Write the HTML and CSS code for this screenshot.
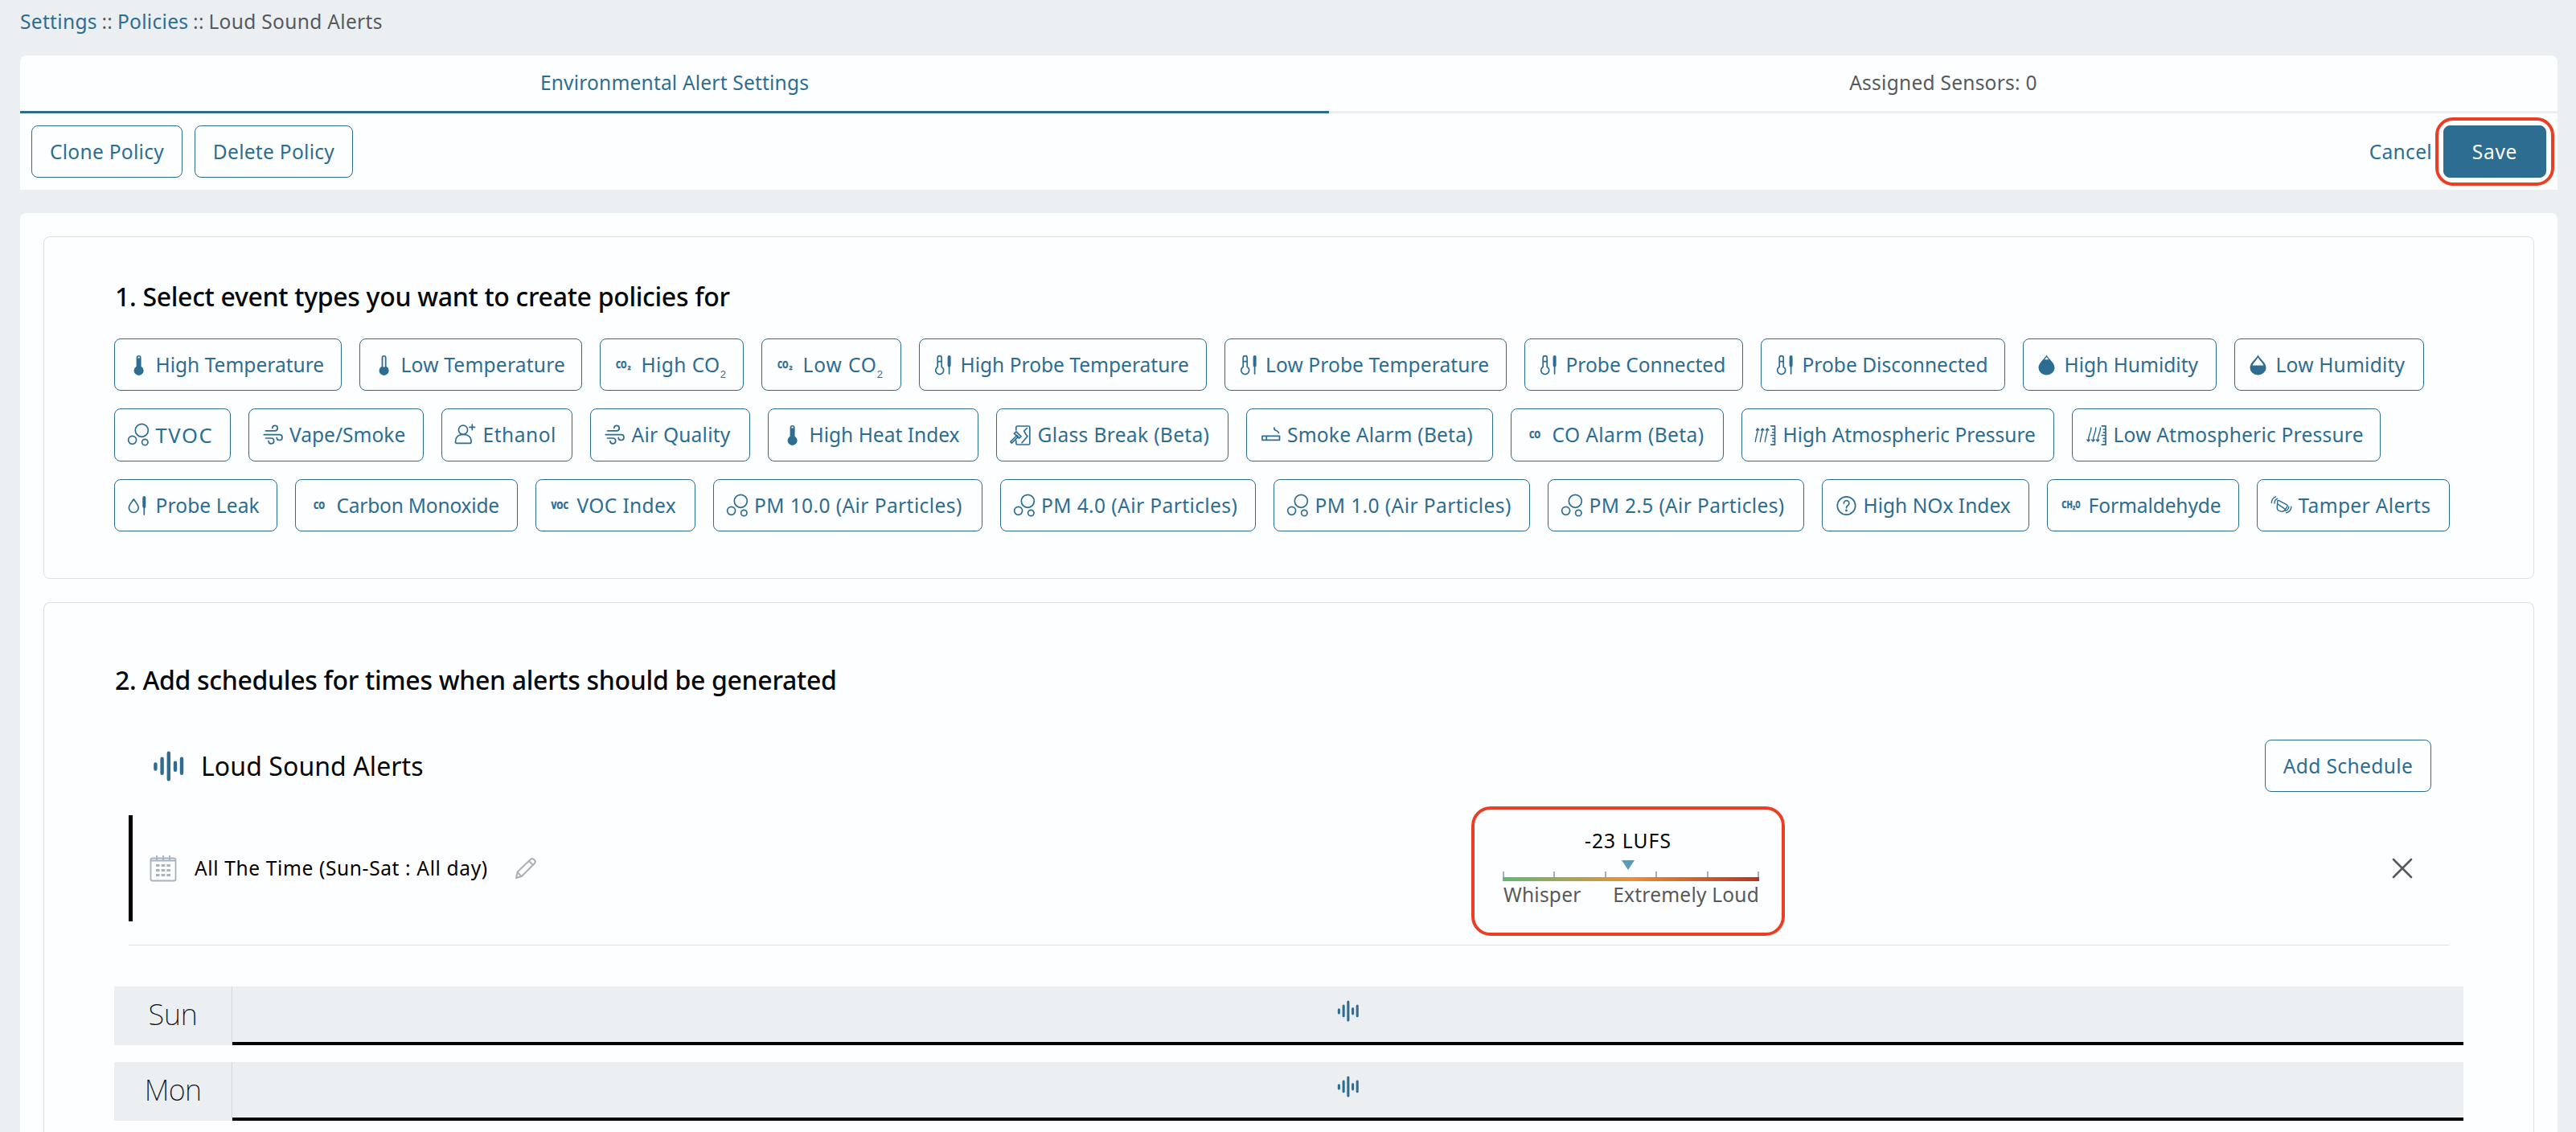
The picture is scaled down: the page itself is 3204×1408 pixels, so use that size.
FILE: index.html
```html
<!DOCTYPE html>
<html lang="en">
<head>
<meta charset="utf-8">
<title>Loud Sound Alerts</title>
<link rel="stylesheet" href="styles.css">
</head>
<body>
<svg class="sprite" aria-hidden="true">
  <symbol id="i-therm-full" viewBox="0 0 32 32"><path fill="currentColor" fill-rule="evenodd" d="M13.6 7a3 3 0 0 1 6 0v10.8a6 6 0 1 1-6 0zM15.4 7.6h2.4v-.8a1.2 1.2 0 0 0-2.4 0z"/></symbol>
  <symbol id="i-therm-low" viewBox="0 0 32 32"><path fill="currentColor" fill-rule="evenodd" d="M13.6 7a3 3 0 0 1 6 0v10.8a6 6 0 1 1-6 0zM15.4 18.4h2.4V6.8a1.2 1.2 0 0 0-2.4 0z"/></symbol>
  <symbol id="i-probe" viewBox="0 0 32 32"><path class="ln" d="M9.2 7.2a2.5 2.5 0 0 1 5 0v11a5 5 0 1 1-5 0zM9.2 11.6h5"/><path class="ln thick" d="M23.6 6v10.5"/><path class="ln" d="M23.6 17v10"/></symbol>
  <symbol id="i-leak" viewBox="0 0 32 32"><path class="ln" d="M10.3 8C8 11.5 4.4 15 4.4 18.600a5.900 5.900 0 0 0 11.800 0C16.200 15 12.600 11.500 10.300 8z"/><path class="ln thick" d="M23.3 6v11"/><path class="ln" d="M23.300 17v10"/></symbol>
  <symbol id="i-drop-full" viewBox="0 0 32 32"><path fill="currentColor" fill-rule="evenodd" d="M15.500 3.500C18.500 9 25.500 13 25.500 19.500a10 9 0 0 1-20 0C5.500 13 12.500 9 15.500 3.500zM13 9.300h5L15.500 6z"/></symbol>
  <symbol id="i-drop-half" viewBox="0 0 32 32"><path fill="currentColor" fill-rule="evenodd" d="M15.500 3.500C18.500 9 25.500 13 25.500 19.500a10 9 0 0 1-20 0C5.500 13 12.500 9 15.500 3.500zM8.500 16.500h14C21 13 17.500 10.500 15.500 6.800 13.500 10.500 10 13 8.500 16.500z"/></symbol>
  <symbol id="i-bubbles" viewBox="0 0 32 32"><g class="ln"><circle cx="20.300" cy="10.300" r="8"/><circle cx="8.600" cy="22.300" r="5"/><circle cx="24.300" cy="25" r="3.700"/></g></symbol>
  <symbol id="i-wind" viewBox="0 0 32 32"><path class="ln" d="M7.500 10.800H19a3.200 3.200 0 1 0-3.200-3.300M5.300 15.700H24.500a3.400 3.400 0 1 1-3.300 3.700M7.500 20h6.700a3.400 3.400 0 1 1-3.300 3.700"/></symbol>
  <symbol id="i-person" viewBox="0 0 32 32"><path class="ln" d="M3.500 24.500c0-6 4-9 9.800-9s9.800 3 9.800 9c0 1-.5 1.800-1.500 1.800H5c-1 0-1.500-.8-1.500-1.800zM24.300 3v6.600M21 6.300h6.600"/><circle class="ln" cx="13" cy="9.700" r="5.600"/></symbol>
  <symbol id="i-glass" viewBox="0 0 32 32"><path class="ln" d="M10.800 10V6.500q0-1.500 1.500-1.500h14q1.500 0 1.500 1.500v20q0 1.500-1.500 1.500h-14q-1.500 0-1.500-1.500V23M24.500 7.500l-3.700 3.700 1.500 3 2.700 3.500-3.500 4-3.500 4M8.500 14.200l2.500-2.300 6 6-2.500 2.300zM5.300 23l-1.500 1.500 1.600 1.600 8-8-1.600-1.600z"/></symbol>
  <symbol id="i-cig" viewBox="0 0 32 32"><path class="ln" d="M6 17.300h21.500v5H6zM11.300 17.300v5M20.800 7c-.5 5 4.500 2 5.700 6.500"/></symbol>
  <symbol id="i-atm-up" viewBox="0 0 32 32"><path class="ln thin" d="M3.300 24.500c.5-6 3-10 2.900-16M9.300 24.500c.5-6 3-10 2.900-16M15.300 24.500c.5-6 3-10 2.900-16M4.500 10l1.700-2 1.700 2M10.500 10l1.700-2 1.700 2M16.500 10l1.700-2 1.700 2"/><path class="ln" d="M22.800 4.800h4.700v23.400h-4.700M24.800 9h2.500M24.800 12.800h2.500M22.800 16.500h4.500M24.800 20.300h2.500M24.800 24h2.500"/></symbol>
  <symbol id="i-atm-down" viewBox="0 0 32 32"><path class="ln thin" d="M9.900 7c.3 6-3.500 9-3.400 16M15.800 7c.3 6-3.500 9-3.400 16M21.500 7c.3 6-3.500 9-3.400 16M4.800 22l1.700 2 1.700-2M10.700 22l1.700 2 1.700-2M16.400 22l1.700 2 1.700-2"/><path class="ln" d="M23.300 4.800h4.700v23.400h-4.700M25.300 9h2.500M25.300 12.800h2.500M23.300 16.500h4.500M25.300 20.300h2.500M25.300 24h2.500"/></symbol>
  <symbol id="i-question" viewBox="0 0 32 32"><circle class="ln" cx="16.500" cy="16" r="11.200"/><path class="ln" d="M13.300 13a3.300 3.300 0 1 1 5 2.800c-1.300.8-1.800 1.300-1.800 3"/><circle cx="16.500" cy="22" r="1.400" fill="currentColor"/></symbol>
  <symbol id="i-tamper" viewBox="0 0 32 32"><path class="ln thin" d="M13 9.300l10 5.300c1.200.7 1.400 1.500.8 2.600l-3.200 4.600c-2 2.600-9 1.200-9.300-2.500v-2.500l.5-6.500c.1-.9.500-1.300 1.200-1zM11.500 13.700l9.500 6.500M4.300 12.500c0-3.500 2-6.500 5.300-7.700M8 13c0-2.500 1.200-4.700 3.500-5.800M22.700 24.800c3.500-.8 5.700-3.500 6.200-7.500M21.500 22.300c2.500-.7 3.900-2.300 4.400-5"/></symbol>
  <symbol id="i-wave" viewBox="0 0 40 38"><path fill="none" stroke="currentColor" stroke-width="4.400" stroke-linecap="round" d="M3.400 16.500v6M11.600 9.800v18M19.800 2.800v32.500M28 14.800v9M36 9.800v18"/></symbol>
</svg>

<nav class="crumbs"><a>Settings</a> <i>::</i> <a>Policies</a> <i>::</i> <span>Loud Sound Alerts</span></nav>

<header class="top-card">
  <div class="tabs">
    <div class="tab active">Environmental Alert Settings</div>
    <div class="tab">Assigned Sensors: 0</div>
  </div>
  <div class="toolbar">
    <button class="btn clone">Clone Policy</button>
    <button class="btn delete">Delete Policy</button>
    <a class="cancel">Cancel</a>
    <button class="btn primary">Save</button>
  </div>
</header>

<main class="main-card">
  <section class="panel events">
    <h2>1. Select event types you want to create policies for</h2>
    <div class="chip-row row-a">
      <div class="chip t3"><svg><use href="#i-therm-full"/></svg>High Temperature</div>
      <div class="chip t5"><svg><use href="#i-therm-low"/></svg>Low Temperature</div>
      <div class="chip t7"><svg viewBox="0 0 32 32"><text x="6" y="19.800" textLength="13.500" lengthAdjust="spacingAndGlyphs">CO</text><text class="tiny" x="20.500" y="22.300" textLength="4" lengthAdjust="spacingAndGlyphs">2</text></svg>High CO<sub>2</sub></div>
      <div class="chip t12"><svg viewBox="0 0 32 32"><text x="6" y="19.800" textLength="13.500" lengthAdjust="spacingAndGlyphs">CO</text><text class="tiny" x="20.500" y="22.300" textLength="4" lengthAdjust="spacingAndGlyphs">2</text></svg>Low CO<sub>2</sub></div>
      <div class="chip t3"><svg><use href="#i-probe"/></svg>High Probe Temperature</div>
      <div class="chip t4"><svg><use href="#i-probe"/></svg>Low Probe Temperature</div>
      <div class="chip t3"><svg><use href="#i-probe"/></svg>Probe Connected</div>
      <div class="chip t3"><svg><use href="#i-probe"/></svg>Probe Disconnected</div>
      <div class="chip t3"><svg><use href="#i-drop-full"/></svg>High Humidity</div>
      <div class="chip t5"><svg><use href="#i-drop-half"/></svg>Low Humidity</div>
    </div>
    <div class="chip-row row-b">
      <div class="chip t27"><svg><use href="#i-bubbles"/></svg>TVOC</div>
      <div class="chip t3"><svg><use href="#i-wind"/></svg>Vape/Smoke</div>
      <div class="chip t8"><svg><use href="#i-person"/></svg>Ethanol</div>
      <div class="chip t5"><svg><use href="#i-wind"/></svg>Air Quality</div>
      <div class="chip t3"><svg><use href="#i-therm-full"/></svg>High Heat Index</div>
      <div class="chip t6"><svg><use href="#i-glass"/></svg>Glass Break (Beta)</div>
      <div class="chip t5"><svg><use href="#i-cig"/></svg>Smoke Alarm (Beta)</div>
      <div class="chip t7"><svg viewBox="0 0 32 32"><text x="9" y="19.800" textLength="14" lengthAdjust="spacingAndGlyphs">CO</text></svg>CO Alarm (Beta)</div>
      <div class="chip t3"><svg><use href="#i-atm-up"/></svg>High Atmospheric Pressure</div>
      <div class="chip t5"><svg><use href="#i-atm-down"/></svg>Low Atmospheric Pressure</div>
    </div>
    <div class="chip-row row-c">
      <div class="chip t4"><svg><use href="#i-leak"/></svg>Probe Leak</div>
      <div class="chip t1"><svg viewBox="0 0 32 32"><text x="9" y="19.800" textLength="14" lengthAdjust="spacingAndGlyphs">CO</text></svg>Carbon Monoxide</div>
      <div class="chip t6"><svg viewBox="0 0 32 32"><text x="5.500" y="20.300" textLength="21.500" lengthAdjust="spacingAndGlyphs">VOC</text></svg>VOC Index</div>
      <div class="chip t7"><svg><use href="#i-bubbles"/></svg>PM 10.0 (Air Particles)</div>
      <div class="chip t7"><svg><use href="#i-bubbles"/></svg>PM 4.0 (Air Particles)</div>
      <div class="chip t7"><svg><use href="#i-bubbles"/></svg>PM 1.0 (Air Particles)</div>
      <div class="chip t6"><svg><use href="#i-bubbles"/></svg>PM 2.5 (Air Particles)</div>
      <div class="chip t3"><svg><use href="#i-question"/></svg>High NOx Index</div>
      <div class="chip t2"><svg viewBox="0 0 32 32"><text x="4.300" y="19" textLength="13.500" lengthAdjust="spacingAndGlyphs">CH</text><text class="tiny" x="17.800" y="21" textLength="3.500" lengthAdjust="spacingAndGlyphs">2</text><text x="21.300" y="19" textLength="6.300" lengthAdjust="spacingAndGlyphs">O</text></svg>Formaldehyde</div>
      <div class="chip t6"><svg><use href="#i-tamper"/></svg>Tamper Alerts</div>
    </div>
  </section>

  <section class="panel schedules">
    <h2>2. Add schedules for times when alerts should be generated</h2>
    <div class="sched-head">
      <svg class="wave"><use href="#i-wave"/></svg>
      <h3>Loud Sound Alerts</h3>
      <button class="btn add">Add Schedule</button>
    </div>
    <div class="sched-item">
      <div class="sched-row">
        <div class="sched-name">
          <svg class="calendar" viewBox="0 0 34 34"><path d="M3.500 4.500h27q2 0 2 2v24q0 2-2 2h-27q-2 0-2-2v-24q0-2 2-2zM1.500 7.500h31M9 1v7M17 1v7M25 1v7"/><path class="dots" d="M8 13.500h18M8 19.500h18M8 25.500h18"/></svg>
          <span>All The Time (Sun-Sat : All day)</span>
          <svg class="pencil" viewBox="0 0 28 28"><path d="M2 26l1.600-7.500L19.800 3q2-2 4.200 0l.8.800q2 2 0 4.200L8.800 24zM18 5l5 5M3.500 19l5 5"/></svg>
        </div>
        <div class="gauge">
          <div class="value">-23 LUFS</div>
          <svg class="pointer" viewBox="0 0 16 12"><path d="M0 0h16L8 12z"/></svg>
          <div class="ticks"><b></b><b></b><b></b><b></b><b></b><b></b></div>
          <div class="bar"></div>
          <div class="ends"><span>Whisper</span><span>Extremely Loud</span></div>
        </div>
        <svg class="close" viewBox="0 0 26 26"><path d="M2 2l22 22M24 2L2 24"/></svg>
      </div>
    </div>
    <div class="days">
      <div class="day"><span>Sun</span><div class="track"><svg><use href="#i-wave"/></svg></div></div>
      <div class="day mon"><span>Mon</span><div class="track"><svg><use href="#i-wave"/></svg></div></div>
    </div>
  </section>
</main>
</body>
</html>
```
FILE: styles.css
```css
:root {
  --blue: #2d6d91;
  --page: #ebeff2;
  --card: #fdfeff;
  --line: #dcdfe4;
  --grey: #58595b;
  --mark: #e94025;
}
*, ::before, ::after { box-sizing: border-box; }
html, body { height: 1408px; overflow: hidden; }
body {
  margin: 0;
  padding: 0 23px 0 25px;
  background: var(--page);
  color: var(--grey);
  font: 400 24.5px/30px "Noto Sans", "Open Sans", sans-serif;
}
.sprite { display: none; }
svg { display: block; flex: none; overflow: visible; }
.ln { fill: none; stroke: currentColor; stroke-width: 1.7; stroke-linecap: round; stroke-linejoin: round; }
.thin { stroke-width: 1.4; }
.thick { stroke-width: 4; }
h2, h3 { margin: 0; color: #050708; font-size: 32px; line-height: 44px; }
h2 { font-weight: 500; letter-spacing: -.31px; padding-left: 1px; }
h3 { font-weight: 400; letter-spacing: .08px; }

.crumbs { display: flex; align-items: center; height: 69px; padding-bottom: 15px; letter-spacing: .33px; }
.crumbs i { font-style: normal; width: 25px; text-align: center; }
.crumbs a { color: var(--blue); }

.top-card { height: 167px; background: var(--card); border-radius: 8px 8px 0 0; }
.tabs { display: grid; grid-template-columns: 1628fr 1528fr; height: 72px; }
.tab {
  display: flex; align-items: center; justify-content: center;
  border-bottom: 3px solid var(--page); letter-spacing: .26px; padding-bottom: 1px;
}
.tab.active { color: var(--blue); border-color: var(--blue); letter-spacing: .2px; }
.toolbar { display: flex; align-items: center; padding: 15px 14px; }
.btn {
  height: 65px; padding: 0; border: 1px solid var(--blue); border-radius: 8px;
  background: var(--card); color: var(--blue); font: inherit; letter-spacing: .3px;
}
.clone { width: 188px; margin-right: 15px; }
.delete { width: 197px; }
.cancel { margin-left: auto; margin-right: 14px; color: var(--blue); letter-spacing: .35px; }
.primary { position: relative; width: 128px; background: var(--blue); color: #fff; letter-spacing: .7px; }
.primary::after {
  content: ""; position: absolute; inset: -11px; border: 4px solid var(--mark); border-radius: 22px;
}

.main-card {
  margin-top: 29px; padding: 29px 29px 0; height: 1143px; overflow: hidden;
  background: var(--card); border-radius: 8px 8px 0 0;
}
.panel { border: 1px solid var(--line); border-radius: 8px; padding: 0 87px; }
.events { height: 426px; padding-top: 52px; }
.events h2 { margin-bottom: 30px; }
.chip-row { display: grid; gap: 22px; height: 65px; margin-bottom: 22px; }
.row-a { grid-template-columns: 283px 277px 179px 174px 357.5px 351.5px 272px 304px 241px 236px; }
.row-b { grid-template-columns: 144.5px 218.5px 163px 199px 262px 288.5px 307.5px 265px 389px 384px; height: 66px; }
.row-c { grid-template-columns: 203px 277px 198.5px 335px 318.5px 319px 319px 258px 239px 240px; }
.chip {
  display: flex; align-items: center; padding-left: 13px;
  border: 1px solid var(--blue); border-radius: 8px; color: var(--blue); white-space: nowrap;
}
.chip svg { width: 32px; height: 32px; margin-right: 5.5px; }
.chip text {
  fill: currentColor; stroke: currentColor; stroke-width: .35px;
  font: 800 12.500px "Noto Sans", sans-serif; letter-spacing: 0;
}
.chip .tiny { font-size: 7px; }
.chip sub { font: 13px/13px "Liberation Sans", Arial, sans-serif; align-self: flex-end; margin-bottom: 13px; }
.t1 { letter-spacing: -.2px; }
.t2 { letter-spacing: -.08px; }
.t3 { letter-spacing: .02px; }
.t4 { letter-spacing: .12px; }
.t5 { letter-spacing: .23px; }
.t6 { letter-spacing: .36px; }
.t7 { letter-spacing: .42px; }
.t8 { letter-spacing: .55px; }
.t12 { letter-spacing: .900px; }
.t27 { letter-spacing: 1.600px; font-size: 25.500px; }

.schedules {
  height: 659px; margin-top: 29px; padding-top: 74px;
  border-bottom: 0; border-radius: 8px 8px 0 0;
}
.sched-head { display: flex; align-items: center; margin-top: 52px; padding: 0 40px 0 48px; }
.wave { width: 40px; height: 38px; margin-right: 20px; color: var(--blue); }
.add { width: 207px; margin-left: auto; letter-spacing: .4px; }
.sched-item { margin: 29px 18px 0; padding-bottom: 29px; border-bottom: 1px solid var(--line); }
.sched-row {
  display: grid; grid-template-columns: 1704px 319px 1fr; align-items: center;
  height: 132px; border-left: 5px solid #000;
}
.sched-name { display: flex; align-items: center; padding-left: 21px; color: #000; letter-spacing: .64px; }
.calendar { width: 34px; height: 34px; margin-right: 22px; fill: none; stroke: #a5b3bf; stroke-width: 1.8; }
.calendar .dots { stroke-width: 3; stroke-dasharray: 4.500 2.200; }
.pencil { width: 28px; height: 28px; margin-left: 33px; fill: none; stroke: #adb0b3; stroke-width: 2; stroke-linejoin: round; }
.gauge { position: relative; align-self: start; padding-top: 17px; }
.gauge::after {
  content: ""; position: absolute; left: -39px; right: -32px; top: -11px; height: 161px;
  border: 4px solid var(--mark); border-radius: 24px;
}
.value { text-align: center; color: #000; letter-spacing: 1.150px; padding-right: 7px; }
.pointer { width: 16px; height: 12px; margin: 9px 0 2px 148px; fill: #5f9ab5; }
.ticks { display: flex; justify-content: space-between; height: 7px; }
.ticks b { width: 2px; background: #a5b0bb; }
.bar { height: 5px; background: linear-gradient(90deg, #5bbb72, #f08e33 50%, #b83322); }
.ends { display: flex; justify-content: space-between; padding: 2px 0 0 1px; letter-spacing: .22px; }
.close { width: 26px; height: 26px; margin: 0 45px 0 auto; fill: none; stroke: var(--grey); stroke-width: 2.600; stroke-linecap: round; }

.days { display: grid; gap: 21px; margin-top: 51px; }
.day { display: grid; grid-template-columns: 147px 1fr; height: 73px; }
.day span {
  display: flex; align-items: center; justify-content: center; padding-bottom: 3px;
  background: var(--page); border-right: 1px solid #d3d8dc;
  color: #111; font-size: 36px; font-weight: 200; letter-spacing: -.2px;
}
.day.mon span { letter-spacing: -.7px; }
.track { display: flex; align-items: center; justify-content: center; padding-bottom: 9px; background: var(--page); border-bottom: 4px solid #000; color: var(--blue); }
.track svg { width: 28px; height: 27px; }
```
